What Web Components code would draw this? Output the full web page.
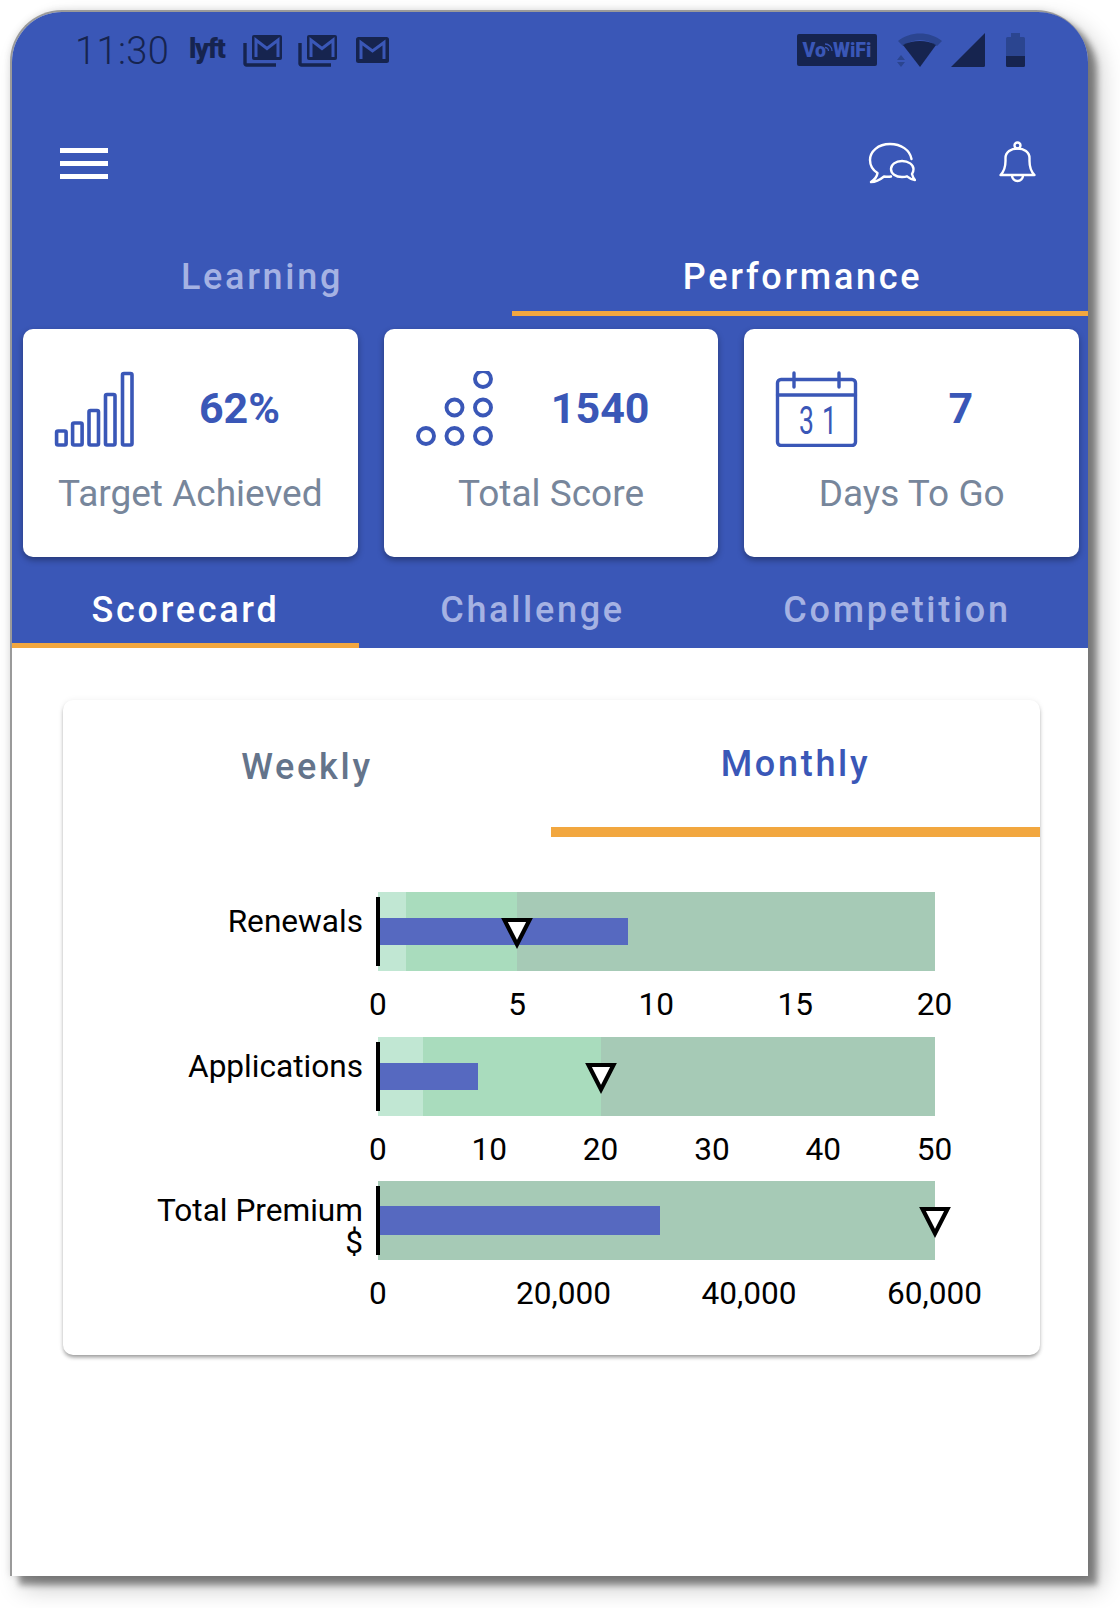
<!DOCTYPE html>
<html lang="en"><head><meta charset="utf-8"><title>Performance</title>
<style>
html,body{margin:0;padding:0;background:#fff}
body{padding:10px 0 0 10px;font-family:Roboto,"Liberation Sans",sans-serif;width:1110px;height:1598px;overflow:hidden}
</style></head><body>
<phone-frame>
  <status-bar></status-bar>
  <app-toolbar></app-toolbar>
  <tab-bar columns="500px 1fr" height="69" shift="2">
    <tab-item>Learning</tab-item>
    <tab-item active style="padding-left:5px">Performance</tab-item>
  </tab-bar>
  <stat-row>
    <stat-card value="62%" label="Target Achieved"><icon-bars></icon-bars></stat-card>
    <stat-card value="1540" label="Total Score"><icon-dots></icon-dots></stat-card>
    <stat-card value="7" label="Days To Go"><icon-calendar></icon-calendar></stat-card>
  </stat-row>
  <tab-bar columns="347px 347px 1fr" height="66" shift="20">
    <tab-item active>Scorecard</tab-item>
    <tab-item>Challenge</tab-item>
    <tab-item>Competition</tab-item>
  </tab-bar>
  <score-panel>
    <bullet-row max="20" ticks="0,5,10,15,20" low="1" mid="5" bar="9" target="5">Renewals</bullet-row>
    <bullet-row max="50" ticks="0,10,20,30,40,50" low="4" mid="20" bar="9" target="20">Applications</bullet-row>
    <bullet-row max="60000" ticks="0,20000,40000,60000" low="0" mid="0" bar="30400" target="60000" bar-top="25" bar-h="29">Total Premium $</bullet-row>
  </score-panel>
</phone-frame>

<script>
const make = (name, css, html) => {
  customElements.define(name, class extends HTMLElement {
    connectedCallback(){
      if (this.shadowRoot) return;
      const r = this.attachShadow({mode:'open'});
      r.innerHTML = `<style>${css}</style>${typeof html==='function'?html(this):html}`;
    }
  });
};

make('phone-frame', `
  :host{display:block;box-sizing:border-box;width:1078px;height:1566px;background:#fff;
    border-top:2px solid #9a9a9a;border-left:2px solid #9a9a9a;border-radius:52px 52px 0 0;
    box-shadow:9px 9px 6px rgba(0,0,0,.4),12px 12px 24px rgba(0,0,0,.22),0 0 7px rgba(0,0,0,.12)}
  .clip{display:block;height:100%;border-radius:50px 50px 0 0;overflow:hidden}
`, `<div class="clip"><slot></slot></div>`);

const DARK = '#16244f';
const stackedMail = m => `<svg style="margin-left:${m}px" width="40" height="33" viewBox="0 0 40 33"><path d="M2 9v20.500a1.500 1.500 0 0 0 1.500 1.500H33" fill="none" stroke="${DARK}" stroke-width="3.400"/><rect x="9" y="1" width="30" height="25" rx="2" fill="${DARK}"/><path d="M13 23V6l11 8.500L35 6v17" fill="none" stroke="#3a57b7" stroke-width="3"/></svg>`;
make('status-bar', `
  :host{display:flex;align-items:center;height:76px;padding:0 63px 0 63px;background:#3a57b7;color:${DARK};box-sizing:border-box}
  .time{font:300 38px/42px Roboto,sans-serif;letter-spacing:.4px;width:92px;position:relative;top:1px;white-space:nowrap}
  .lyft{font:900 27px/26px Roboto,sans-serif;letter-spacing:-1.300px;margin-left:22px;width:37px;position:relative;top:-1px;white-space:nowrap}
  svg{display:block;flex:none}
  .left{display:flex;align-items:center;flex:1}
  .vowifi{display:flex;align-items:center;justify-content:center;box-sizing:border-box;width:80px;height:32px;padding-top:2px;background:${DARK};border-radius:2px;color:#3a57b7;font:900 19.500px/30px Roboto,sans-serif;white-space:nowrap;margin-right:20px}
`, `<div class="left"><span class="time">11:30</span><span class="lyft">lyft</span>
  ${stackedMail(17)}${stackedMail(15)}
  <svg style="margin-left:18px" width="33" height="26" viewBox="0 0 33 26"><rect width="33" height="26" rx="2.500" fill="${DARK}"/><path d="M5 22V5.500l11.500 8.500L28 5.500V22" fill="none" stroke="#3a57b7" stroke-width="3"/></svg></div>
  <div class="vowifi"><span>Vo</span><svg width="8" height="14" viewBox="0 0 8 14" style="margin:-6px 0 0 -1px"><path d="M0 3a7 7 0 0 1 7 7M0 6.500a3.500 3.500 0 0 1 3.500 3.500" fill="none" stroke="#3a57b7" stroke-width="1.300"/></svg><span>WiFi</span></div>
  <svg width="46" height="34" viewBox="0 0 46 34" style="margin-right:8px"><path d="M1 8C13 -2 33 -2 45 8L40 13C29 5 17 5 6 13Z" fill="#2b4590"/><path d="M6 12C16 6.500 30 6.500 39 12L23 34Z" fill="${DARK}"/><path d="M4 22l4 5H0ZM4 34l-4-5h8Z" fill="#2b4590"/></svg>
  <svg width="35" height="34" viewBox="0 0 35 34" style="margin-right:20px"><path d="M34 0V32.500a1.500 1.500 0 0 1-1.500 1.500H0Z" fill="${DARK}"/></svg>
  <svg width="19" height="34" viewBox="0 0 19 34"><path d="M5 0h9v4h3.500a1.500 1.500 0 0 1 1.500 1.500V23H0V5.500A1.500 1.500 0 0 1 1.500 4H5Z" fill="#2b4590"/><path d="M0 23h19v9.500a1.500 1.500 0 0 1-1.500 1.500H1.500A1.500 1.500 0 0 1 0 32.500Z" fill="${DARK}"/></svg>
`);

make('app-toolbar', `
  :host{display:flex;align-items:center;height:152px;padding:0 52px 2px 48px;background:#3a57b7;box-sizing:border-box}
  .menu{display:flex;flex-direction:column;justify-content:space-between;width:48px;height:31px}
  .menu i{display:block;height:5px;background:#fff}
  .grow{flex:1}
  svg{display:block;fill:none;stroke:#fff;stroke-width:2.400;stroke-linecap:round;stroke-linejoin:round}
`, `<div class="menu"><i></i><i></i><i></i></div><div class="grow"></div>
  <svg width="48" height="42" viewBox="0 0 48 42" style="margin-right:83px"><path d="M43.500 17C42 8 33 2 22 2C10 2 2 9.500 2 18C2 24 5.500 28.500 9.500 31C9 35 6 38 3 40C8 40 13 37 16 34.500C18 34.800 20.500 35 23 34.500"/><path d="M34 19C27.500 19 23 22.700 23 27C23 31.500 27.500 35 34 35C36 35 38 34.700 39 34.300C41 36 44 37.500 47 38C45.500 36.500 44.500 34 44 32C45 30.700 45.500 29 45.500 27C45.500 22.700 40.500 19 34 19Z"/></svg>
  <svg width="37" height="44" viewBox="0 0 37 44" style="margin-top:-1px"><circle cx="18.500" cy="4.500" r="3"/><path d="M1.500 34C5 30.500 6.500 26 6.500 20V17C6.500 11 12 7.500 18.500 7.500S30.500 11 30.500 17V20C30.500 26 32 30.500 35.500 34Z"/><path d="M13 34.500a5.500 5.500 0 0 0 11 0"/></svg>
`);

make('tab-bar', `
  :host{display:grid;background:#3a57b7;font:500 36px/42px Roboto,sans-serif;letter-spacing:2.700px;color:#a5b2e3}
`, h => {
  h.style.gridTemplateColumns = h.getAttribute('columns');
  h.style.setProperty('--tab-h', (+h.getAttribute('height') + +h.getAttribute('shift') + 5) + 'px');
  h.style.setProperty('--tab-pad', h.getAttribute('shift') + 'px');
  return `<slot></slot>`;
});
make('tab-item', `
  :host{display:flex;box-sizing:border-box;align-items:center;justify-content:center;height:var(--tab-h,76px);padding-top:var(--tab-pad,0);border-bottom:5px solid transparent;white-space:nowrap}
  :host([active]){color:#fff;border-bottom-color:#f2a73f}
`, `<slot></slot>`);

make('stat-row', `:host{display:flex;gap:26px;padding:13px 9px 0 11px;background:#3a57b7}`, `<slot></slot>`);
make('stat-card', `
  :host{display:block;flex:1;box-sizing:border-box;height:228px;background:#fff;border-radius:10px;box-shadow:0 3px 6px rgba(0,0,0,.35);padding:42px 0 0 32px;min-width:0}
  .top{display:grid;grid-template-columns:88px 193px;height:75px;align-items:start}
  .val{font:700 43px/52px Roboto,sans-serif;color:#3a57b7;text-align:center;margin-top:11px}
  .lab{margin:27px 0 0 -32px;font:400 37px/42px Roboto,sans-serif;color:#77869b;text-align:center}
`, h=>`<div class="top"><slot></slot><div class="val">${h.getAttribute('value')}</div></div><div class="lab">${h.getAttribute('label')}</div>`);

make('icon-bars', `:host{display:block}svg{display:block;overflow:visible}`,
 `<svg width="80" height="76" viewBox="0 0 80 76" fill="none" stroke="#3a57b7" stroke-width="3.600"><rect x="1.600" y="60" width="9.500" height="14" rx="1.500"/><rect x="17.600" y="52" width="9.500" height="22" rx="1.500"/><rect x="34" y="39.500" width="9.500" height="34.500" rx="1.500"/><rect x="50.500" y="23.500" width="9.500" height="50.500" rx="1.500"/><rect x="67.500" y="2.500" width="9.500" height="71.500" rx="1.500"/></svg>`);
make('icon-dots', `:host{display:block}svg{display:block}`,
 `<svg width="80" height="76" viewBox="0 0 80 76" fill="none" stroke="#3a57b7" stroke-width="3.900"><circle cx="10" cy="65" r="8"/><circle cx="38.500" cy="65" r="8"/><circle cx="67" cy="65" r="8"/><circle cx="38.500" cy="36.500" r="8"/><circle cx="67" cy="36.500" r="8"/><circle cx="67" cy="8" r="8"/></svg>`);
make('icon-calendar', `:host{display:block;margin-left:-1px}svg{display:block}text{font:400 39px Roboto,sans-serif;fill:#3a57b7;letter-spacing:12px}`,
 `<svg width="84" height="76" viewBox="0 0 84 76" fill="none" stroke="#3a57b7" stroke-width="3.400" stroke-linecap="round"><rect x="2.500" y="8.500" width="78" height="66" rx="3.500"/><path d="M2.500 24H80.500M19 2V16M64 2V16"/><text transform="translate(24 62.500) scale(.68 1)" stroke="none">31</text></svg>`);

make('score-panel', `
  :host{display:block;box-sizing:border-box;width:977px;height:655px;margin:52px 0 0 51px;background:#fff;border-radius:10px;box-shadow:0 3px 4px -1px rgba(0,0,0,.42),0 0 6px rgba(0,0,0,.06)}
  .tabs{display:grid;grid-template-columns:488px 1fr;height:137px;font:500 36px/42px Roboto,sans-serif;letter-spacing:2.700px}
  .tabs div{box-sizing:border-box;text-align:center}
  .w{color:#64748b;padding-top:46px}
  .m{color:#3a57b7;padding-top:43px;border-bottom:10px solid #f2a73f}
  .rows{padding-top:55px}
`, `<div class="tabs"><div class="w">Weekly</div><div class="m">Monthly</div></div><div class="rows"><slot></slot></div>`);

make('bullet-row', `
  :host{display:grid;grid-template-columns:300px 556.500px;column-gap:15px;height:144.500px;font:400 31.600px/32px Roboto,sans-serif;color:#000}
  .lab{padding-top:14px;text-align:right;justify-self:end;max-width:230px}
  .plot{position:relative;height:79px}
  .band{position:absolute;top:0;bottom:0;left:0}
  .bar{position:absolute;left:2px;background:#5669c0}
  .base{position:absolute;left:-2px;top:5px;bottom:5px;width:4px;background:#000}
  svg{position:absolute;top:26px;margin-left:-16px}
  .ticks{position:absolute;left:0;right:0;top:94px}
  .ticks span{position:absolute;transform:translateX(-50%);line-height:38px;white-space:nowrap}
`, h=>{
  const a=n=>+h.getAttribute(n), max=a('max'), pc=v=>v/max*100+'%';
  const ticks=h.getAttribute('ticks').split(',').map(t=>`<span style="left:${pc(+t)}">${(+t).toLocaleString('en-US')}</span>`).join('');
  const top=h.getAttribute('bar-top')||26, bh=h.getAttribute('bar-h')||27;
  return `<div class="lab"><slot></slot></div><div class="plot">
    <div class="band" style="width:100%;background:#a6cab6"></div>
    <div class="band" style="width:${pc(a('mid'))};background:#a9dcbd"></div>
    <div class="band" style="width:${pc(a('low'))};background:#c1e7d3"></div>
    <div class="bar" style="top:${top}px;height:${bh}px;width:calc(${pc(a('bar'))} - 2px)"></div>
    <div class="base"></div>
    <svg width="32" height="32" viewBox="0 0 32 32" style="left:${pc(a('target'))}"><path d="M3.500 2H28.500L16 26.500Z" fill="#fff" stroke="#000" stroke-width="4.200"/></svg>
    <div class="ticks">${ticks}</div></div>`;
});
</script>
</body></html>
